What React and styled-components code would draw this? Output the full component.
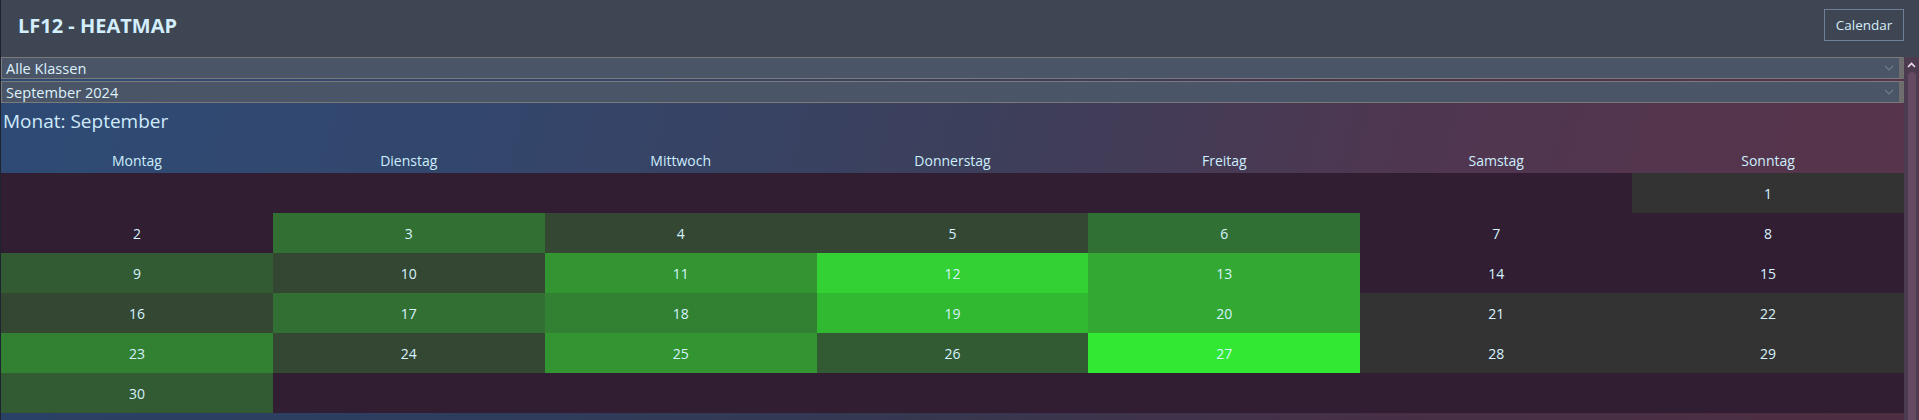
import React from "react";
import styled, { createGlobalStyle } from "styled-components";

const GlobalStyle = createGlobalStyle`
  html, body { margin: 0; padding: 0; background: #1f2630; }
  body { font-family: "Open Sans", "Noto Sans", sans-serif; overflow: hidden; }
  * { box-sizing: border-box; }
`;

const Page = styled.div`
  width: 1919px;
  height: 420px;
  border-left: 1px solid #1d2430;
  display: flex;
  flex-direction: column;
  overflow: hidden;
`;

const Header = styled.header`
  height: 57px;
  flex: none;
  background: #3d4652;
  display: flex;
  align-items: center;
  justify-content: space-between;
  padding: 0 15px 0 17px;
`;

const Title = styled.h1`
  margin: 0;
  font-size: 20px;
  font-weight: 700;
  color: #d3eefc;
  margin-top: -7px;
`;

const NavButton = styled.button`
  height: 32px;
  width: 80px;
  background: transparent;
  border: 1px solid #6f8098;
  color: #d6ecf8;
  font-family: inherit;
  font-size: 13.5px;
  margin-top: -7px;
  padding: 0;
  cursor: pointer;
`;

const Body = styled.div`
  flex: 1;
  display: flex;
  min-height: 0;
`;

const Content = styled.main`
  flex: 1;
  min-width: 0;
  display: flex;
  flex-direction: column;
  overflow: hidden;
  background:
    linear-gradient(to bottom, rgba(0,0,0,0) 55%, rgba(0,0,0,0.12) 100%),
    linear-gradient(105deg, #2e4b75 0%, #33466c 25%, #3c3f5b 50%, #4f3650 72%, #58344a 100%);
`;

const ScrollTrack = styled.div`
  width: 15px;
  flex: none;
  background: #4d3c50;
  display: flex;
  flex-direction: column;
`;

const ScrollButton = styled.div`
  height: 15px;
  display: flex;
  align-items: center;
  justify-content: center;
`;

const ScrollThumb = styled.div`
  flex: 1;
  margin: 0 3px 0 4px;
  border-radius: 4px 4px 0 0;
  background: #644a63;
`;

const SelectWrap = styled.div`
  position: relative;
  margin-bottom: 2px;
`;

const Select = styled.select`
  appearance: none;
  -webkit-appearance: none;
  display: block;
  width: 100%;
  height: 22px;
  background: #4a5567;
  border: 1px solid #7b7b7b;
  border-right: 5px solid #6e6e6e;
  border-radius: 0;
  color: #ddf1fd;
  font-family: inherit;
  font-size: 14.6px;
  line-height: 20px;
  padding: 0 0 0 4px;
  outline: none;
`;

const Chevron = styled.svg`
  position: absolute;
  right: 10px;
  top: 8px;
  pointer-events: none;
`;

const MonthTitle = styled.h3`
  margin: 1px 0 0;
  height: 32px;
  line-height: 30px;
  font-size: 19px;
  font-weight: 400;
  color: #cfeafc;
  padding-left: 2px;
`;

const WeekHead = styled.div`
  display: grid;
  grid-template-columns: repeat(7, 1fr);
  height: 35px;
  align-items: end;
  padding-bottom: 2px;
`;

const WeekDay = styled.div`
  text-align: center;
  font-size: 14px;
  line-height: 20px;
  color: #cdeefd;
`;

const Grid = styled.div`
  display: grid;
  grid-template-columns: repeat(7, 1fr);
  grid-auto-rows: 40px;
  background: #311e33;
`;

const Cell = styled.div`
  display: flex;
  align-items: center;
  justify-content: center;
  font-size: 14px;
  color: #d7f3ff;
  background: ${(p) => p.$bg || "transparent"};
`;

const colors = {
  1: "#333333",
  3: "#326f33",
  4: "#334733",
  5: "#334733",
  6: "#317034",
  9: "#325a33",
  10: "#334733",
  11: "#329532",
  12: "#33d133",
  13: "#33a833",
  16: "#334733",
  17: "#326f33",
  18: "#328133",
  19: "#32b932",
  20: "#33a833",
  21: "#333333",
  22: "#333333",
  23: "#328133",
  24: "#334733",
  25: "#329532",
  26: "#325a33",
  27: "#33e833",
  28: "#333333",
  29: "#333333",
  30: "#325a33",
};

const weekdays = ["Montag", "Dienstag", "Mittwoch", "Donnerstag", "Freitag", "Samstag", "Sonntag"];

function Dropdown({ value }) {
  return (
    <SelectWrap>
      <Select defaultValue={value}>
        <option>{value}</option>
      </Select>
      <Chevron width="10" height="6" viewBox="0 0 10 6">
        <path d="M1 1 L5 5 L9 1" fill="none" stroke="#6f7a88" strokeWidth="1.2" />
      </Chevron>
    </SelectWrap>
  );
}

export default function App() {
  const cells = [];
  for (let i = 0; i < 6; i++) cells.push(null);
  for (let d = 1; d <= 30; d++) cells.push(d);
  while (cells.length < 42) cells.push(null);

  return (
    <>
      <GlobalStyle />
      <Page>
        <Header>
          <Title>LF12 - HEATMAP</Title>
          <NavButton>Calendar</NavButton>
        </Header>
        <Body>
          <Content>
            <Dropdown value="Alle Klassen" />
            <Dropdown value="September 2024" />
            <MonthTitle>Monat: September</MonthTitle>
            <WeekHead>
              {weekdays.map((w) => (
                <WeekDay key={w}>{w}</WeekDay>
              ))}
            </WeekHead>
            <Grid>
              {cells.map((d, i) => (
                <Cell key={i} $bg={d ? colors[d] : undefined}>
                  {d || ""}
                </Cell>
              ))}
            </Grid>
          </Content>
          <ScrollTrack>
            <ScrollButton>
              <svg width="9" height="6" viewBox="0 0 9 6">
                <path d="M1 5 L4.5 1.5 L8 5" fill="none" stroke="#e8e0ea" strokeWidth="1.6" />
              </svg>
            </ScrollButton>
            <ScrollThumb />
          </ScrollTrack>
        </Body>
      </Page>
    </>
  );
}
